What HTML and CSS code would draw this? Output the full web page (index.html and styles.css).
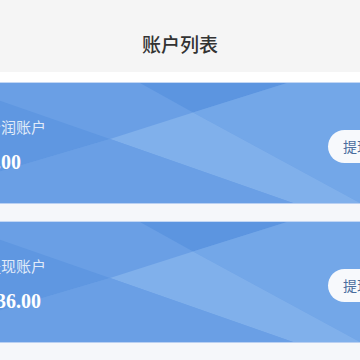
FILE: index.html
```html
<!DOCTYPE html>
<html lang="zh-CN">
<head>
    <meta charset="UTF-8">
    <meta name="viewport" content="width=device-width, initial-scale=1.0">
    <title>账户列表</title>
    <link rel="stylesheet" href="styles.css">
</head>
<body>
    <div class="header">
        <h1 class="title">账户列表</h1>
    </div>

    <div class="account-list">
        <!-- 分润账户 -->
        <div class="account-card">
            <svg class="card-bg" viewBox="0 0 360 122" preserveAspectRatio="none">
                <polygon points="0,18 110,57 0,90" fill="#5f97e1"/>
                <polygon points="140,0 287,0 193,30" fill="#5c95e0"/>
                <polygon points="193,30 287,0 360,0 360,122" fill="#73a7e8"/>
                <polygon points="110,57 193,30 360,122 293,122" fill="#80b0eb"/>
                <polygon points="0,90 110,57 293,122 0,122" fill="#6a9fe5"/>
            </svg>
            <div class="card-row">
                <div class="card-info">
                    <div class="card-label">分润账户</div>
                    <div class="card-amount">0.00</div>
                </div>
                <button class="withdraw-button">提现</button>
            </div>
        </div>

        <!-- 提现账户 -->
        <div class="account-card">
            <svg class="card-bg" viewBox="0 0 360 122" preserveAspectRatio="none">
                <polygon points="0,18 110,57 0,90" fill="#5f97e1"/>
                <polygon points="140,0 287,0 193,30" fill="#5c95e0"/>
                <polygon points="193,30 287,0 360,0 360,122" fill="#73a7e8"/>
                <polygon points="110,57 193,30 360,122 293,122" fill="#80b0eb"/>
                <polygon points="0,90 110,57 293,122 0,122" fill="#6a9fe5"/>
            </svg>
            <div class="card-row">
                <div class="card-info">
                    <div class="card-label">提现账户</div>
                    <div class="card-amount">136.00</div>
                </div>
                <button class="withdraw-button">提现</button>
            </div>
        </div>
    </div>
</body>
</html>
```

FILE: styles.css
```css
body {
    margin: 0;
    font-family: "Noto Sans CJK SC", "Noto Sans", sans-serif;
    background-color: #f5f7fa;
    overflow: hidden;
}
.header {
    height: 72px;
    box-sizing: border-box;
    padding-top: 32px;
    background-color: #f5f5f5;
    text-align: center;
}
.title {
    margin: 0;
    font-size: 19px;
    line-height: 24px;
    font-weight: 500;
    color: #333;
}
.account-list {
    padding-top: 10px;
    background: linear-gradient(#fff 0, #fff 10px, transparent 10px);
}
.account-card {
    position: relative;
    height: 122px;
    box-sizing: border-box;
    margin-bottom: 17px;
    background-color: #6a9fe5;
    border-top: 1px solid #c3d7f4;
    border-bottom: 1px solid #b9d0f2;
    overflow: hidden;
}
.card-bg {
    position: absolute;
    top: 0;
    left: 0;
    width: 100%;
    height: 100%;
}
.card-row {
    position: relative;
    height: 100%;
    box-sizing: border-box;
    padding-top: 6px;
    margin: 0 -26px 0 -14px;
    display: flex;
    align-items: center;
    justify-content: space-between;
}
.card-label {
    font-size: 15px;
    line-height: 22px;
    color: rgba(255, 255, 255, 0.82);
}
.card-amount {
    margin-top: 10px;
    font-family: "Liberation Serif", "Times New Roman", serif;
    font-size: 20px;
    line-height: 28px;
    font-weight: bold;
    color: #fff;
}
.withdraw-button {
    height: 33px;
    padding: 0 15px;
    border: none;
    border-radius: 17px;
    background-color: #f7f9fc;
    font-family: "Noto Sans CJK SC", sans-serif;
    font-size: 14px;
    color: #4a6d9e;
}
```
